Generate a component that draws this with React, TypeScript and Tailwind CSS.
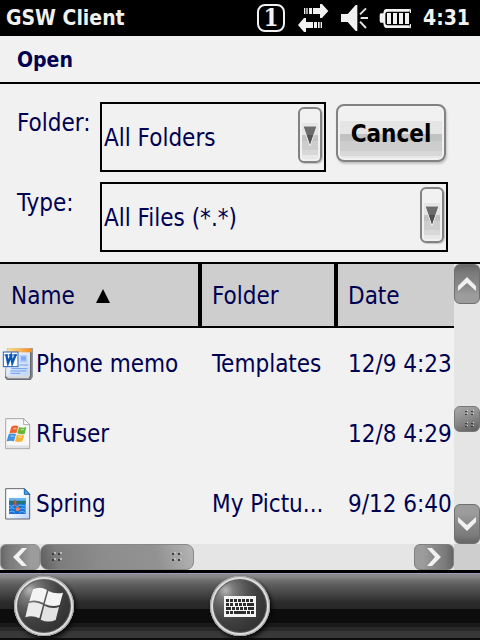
import type { ReactNode } from "react";

const files = [
  { name: "Phone memo", folder: "Templates", date: "12/9 4:23", icon: <WordIcon /> },
  { name: "RFuser", folder: "", date: "12/8 4:29", icon: <WindowsFileIcon /> },
  { name: "Spring", folder: "My Pictu...", date: "9/12 6:40", icon: <PictureIcon /> },
];

function TransferIcon() {
  return (
    <svg className="h-7 w-8" viewBox="0 0 96 84" fill="#f1f1f1">
      <path d="M21 12h4v18h-4zM28 12h4v18h-4zM36 12h9v18h-9zM48 12h21V0h6l19 21-19 21h-6V30H48z" />
      <path d="M3 63l18-21h6v12h21v18H27v12h-6zM51 54h9v18h-9zM63 54h5v18h-5zM71 54h4v18h-4z" />
    </svg>
  );
}

function SpeakerIcon() {
  return (
    <svg className="-mr-0.5 h-7 w-7" viewBox="0 0 84 84">
      <path d="M0 30h20L44 3h5v78h-5L20 54H0z" fill="#f1f1f1" />
      <path d="M57 31l18-18M59 42h22M57 53l18 19" stroke="#e4e4e4" strokeWidth="6" fill="none" />
    </svg>
  );
}

function BatteryIcon() {
  return (
    <svg className="h-7 w-8" viewBox="0 0 96 84">
      <path d="M92 15H22q-8 0-9 13H6q-4 0-4 6v16q0 6 4 6h7q1 16 9 16h70" fill="#f1f1f1" />
      <path d="M96 23H26q-7 0-7 7v27q0 7 7 7h70z" fill="#000" />
      <path d="M92 15q3 2 3 12M95 60q0 10-3 12" stroke="#f1f1f1" strokeWidth="4" fill="none" />
      <path d="M24 27h12v33H24zM42 27h12v33H42zM60 27h12v33H60zM78 27h12v33H78z" fill="#f1f1f1" />
    </svg>
  );
}

function WordIcon() {
  return (
    <svg className="h-8 w-8 shrink-0" viewBox="0 0 96 96">
      <defs>
        <linearGradient id="word-page" x1="0" y1="0" x2="1" y2="1">
          <stop offset="0" stopColor="#fdfeff" />
          <stop offset="1" stopColor="#bfd5f5" />
        </linearGradient>
        <linearGradient id="word-tab" x1="0" y1="0" x2="1" y2="0">
          <stop offset="0" stopColor="#ffe08a" />
          <stop offset="1" stopColor="#f08a24" />
        </linearGradient>
      </defs>
      <path d="M15 1h77v86l-7 10H16l-7-8z" fill="#686868" />
      <path d="M16 1h68v82l-4 7H18l-7-5z" fill="#d9d9d9" />
      <path d="M84 1h6v84l-8 7H14" fill="none" stroke="#8f9baf" strokeWidth="3" />
      <path d="M18 13h66v62l-6 8H12z" fill="url(#word-page)" />
      <path d="M16 1h74v12H16z" fill="url(#word-tab)" />
      <path d="M53 20h23v24H53z" fill="#b9cff6" />
      <path d="M57 25h15v13H57z" fill="#85aaf0" />
      <path d="M52 51h26M28 62h48M25 69h48M25 76h30" stroke="#6d99e8" strokeWidth="3" />
      <rect x="4" y="12" width="44" height="44" fill="#fff" stroke="#1e63c4" strokeWidth="3" />
      <path d="M13 21l5 24 9-22 4 22 10-25" fill="none" stroke="#0b57b8" strokeWidth="7" />
      <path d="M8 21h11M21 21h11M34 21h11" stroke="#0b57b8" strokeWidth="4" />
    </svg>
  );
}

function WindowsFileIcon() {
  return (
    <svg className="h-8 w-8 shrink-0" viewBox="0 0 96 96">
      <path d="M11 2h54l18 18v72H11z" fill="#f8f8f8" stroke="#a8a8a8" strokeWidth="3" />
      <path d="M13 82h68v8H13z" fill="#e2e2e2" />
      <path d="M65 2v18h18z" fill="#fff" stroke="#a8a8a8" strokeWidth="3" />
      <path d="M28 26q11-6 21-1l-6 21q-10-4-21 1z" fill="#f0622b" />
      <path d="M51 27q10 5 22 0l-5 20q-12 4-22-1z" fill="#63b734" />
      <path d="M20 49q11-5 22-1l-6 22q-10-4-22 0z" fill="#3f91e6" />
      <path d="M45 49q10 5 22 1l-6 20q-11 5-22-1z" fill="#fbb42e" />
      <path d="M33 33q6-3 10 0M56 34q5 2 10 0M26 55q5-3 10 0M49 56q5 3 11 1" fill="none" stroke="#fff" strokeOpacity=".5" strokeWidth="4" />
    </svg>
  );
}

function PictureIcon() {
  return (
    <svg className="h-8 w-8 shrink-0" viewBox="0 0 96 96">
      <defs>
        <linearGradient id="picture-page" x1="0" y1="0" x2="1" y2="1">
          <stop offset=".4" stopColor="#fdfeff" />
          <stop offset="1" stopColor="#b5d4fb" />
        </linearGradient>
      </defs>
      <path d="M11 2h56l16 16v75H11z" fill="url(#picture-page)" stroke="#62656b" strokeWidth="3" />
      <path d="M67 2v17h16z" fill="#4aa5f5" stroke="#1763b5" strokeWidth="3" />
      <path d="M21 30h50v48H21z" fill="#1d6fd6" />
      <path d="M21 30h50v8H21z" fill="#63b9f2" />
      <path d="M21 39h50v8H21z" fill="#23756d" />
      <path d="M21 52l8 3 8-4 9 4 8-4 17 4M21 62l9-3 8 3M52 64l9-4 10 4M22 72l9-3 8 4M52 73l9-3 9 4" fill="none" stroke="#63b9f2" strokeWidth="3" />
      <path d="M37 34l6 5v14h-6z" fill="#e5512d" />
      <path d="M41 60l8-3 5 6-5 7-7-2z" fill="#f0805a" />
    </svg>
  );
}

function FlagIcon() {
  return (
    <svg className="h-[60px] w-[60px]" viewBox="0 0 180 180" fill="#f4f4f4">
      <path d="M57 40Q78 30 99 42L88 81Q67 69 46 76z" />
      <path d="M103 45Q125 56 147 50L137 87Q115 95 92 84z" />
      <path d="M44 81Q65 74 87 86L76 127Q55 116 34 124z" fill="#ececec" />
      <path d="M91 89Q113 100 135 93L125 132Q103 142 80 131z" fill="#e2e2e2" />
    </svg>
  );
}

function KeyboardIcon() {
  return (
    <svg className="h-[60px] w-[60px]" viewBox="0 0 180 180" shapeRendering="crispEdges">
      <rect x="42" y="60" width="96" height="63" rx="3" fill="#f4f4f4" />
      <g fill="none" stroke="#2c2c2c" strokeWidth="9">
        <path d="M48 73h84" strokeDasharray="9 3" />
        <path d="M48 85h9M60 85h9M75 85h9M87 85h9M99 85h9M111 85h21" />
        <path d="M48 97h15M66 97h9M78 97h9M90 97h9M102 97h9M114 97h18" />
        <path d="M48 109h9M60 109h9M72 109h36M111 109h9M123 109h9" />
      </g>
    </svg>
  );
}

function Chevron({ d }: { d: string }) {
  return (
    <svg className="h-6 w-6 shrink-0" viewBox="0 0 24 24" fill="#f1f1f1">
      <path d={d} />
    </svg>
  );
}

function Grip() {
  return (
    <svg className="h-3 w-3" viewBox="0 0 12 12" shapeRendering="crispEdges">
      <path d="M1 2h2v2H1zM7 2h2v2H7zM1 8h2v2H1zM7 8h2v2H7z" fill="#3c3c3c" />
      <path d="M3 1h2v2H3zM9 1h2v2H9zM3 7h2v2H3zM9 7h2v2H9z" fill="#bbb" />
    </svg>
  );
}

function FlatGrip() {
  return (
    <svg className="h-1.5 w-3" viewBox="0 0 12 6" shapeRendering="crispEdges">
      <path d="M2 1h2v1H2zM8 1h2v1H8zM2 4h2v1H2zM8 4h2v1H8z" fill="#3c3c3c" />
      <path d="M4 0h1v1H4zM10 0h1v1h-1zM4 3h1v1H4zM10 3h1v1h-1z" fill="#ddd" />
    </svg>
  );
}

function SelectBox({ id, value }: { id: string; value: string }) {
  return (
    <div className="relative min-w-0 flex-1">
      <select
        id={id}
        className="h-[70px] w-full appearance-none border-2 border-black bg-[#f1f1f1] pt-0.5 pr-8 pl-0.5 text-[24px]"
      >
        <option>{value}</option>
      </select>
      <span className="pointer-events-none absolute top-[5px] right-1 flex h-14 w-6 items-center justify-center rounded-md border-2 border-[#828282] bg-[linear-gradient(to_bottom,#f1f1f1_14px,#e5e5e5_14px,#e5e5e5_26px,#c2c2c2_26px,#c2c2c2_32px,#cdcdcd_32px,#cdcdcd_41px,#d8d8d8_41px,#d8d8d8_46px,#e8e8e8_46px)] shadow-[inset_0_0_0_2px_#f1f1f1,1px_1px_1px_#c4c4c4]">
        <svg className="h-6 w-4 shrink-0" viewBox="0 0 16 24">
          <path d="M1 3h14L8 23z" fill="#6c6c6c" stroke="#ededed" strokeWidth="1" />
          <path d="M5 12h6L8 21z" fill="#505050" />
        </svg>
      </span>
    </div>
  );
}

function RoundButton({ label, children }: { label: string; children: ReactNode }) {
  return (
    <button
      aria-label={label}
      className="h-[60px] w-[60px] rounded-full bg-[radial-gradient(ellipse_at_26%_24%,#b5b5b5_0px,#7c7c7c_8px,#5c5c5c_18px,#404040_30px,#303030_48px)] shadow-[inset_0_0_0_1px_#a0a0a0,inset_0_0_0_3px_#dedede,inset_0_0_1px_4px_#606060,2px_3px_4px_#080808]"
    >
      {children}
    </button>
  );
}

export default function App() {
  return (
    <div className="flex min-h-screen flex-col bg-[#f1f1f1] font-['DejaVu_Sans_Condensed','Noto_Sans',sans-serif] text-[24px] leading-7 text-[#000050]">
      <header className="flex h-9 items-center bg-black pr-2.5 pl-1.5 text-[21px] font-bold text-[#f1f1f1]">
        <h1 className="flex-1">GSW Client</h1>
        <div className="flex items-center gap-3">
          <span className="flex h-7 w-7 items-center justify-center rounded-lg border-2 border-[#f1f1f1] font-['DejaVu_Serif_Condensed','DejaVu_Serif',serif] text-[24px]">
            1
          </span>
          <TransferIcon />
          <SpeakerIcon />
          <BatteryIcon />
          <time>4:31</time>
        </div>
      </header>

      <h2 className="flex h-12 items-center border-b-2 border-black pt-0.5 pl-[17px] text-[21px] font-bold">Open</h2>

      <form className="flex flex-col gap-2.5 pt-[18px] pr-8 pb-2.5 pl-[17px]">
        <div className="flex">
          <label htmlFor="folder" className="w-[83px] pt-[7px]">
            Folder:
          </label>
          <SelectBox id="folder" value="All Folders" />
          <button
            type="button"
            className="mt-0.5 mr-0.5 ml-2.5 h-[58px] w-[110px] rounded-lg border-2 border-[#828282] bg-[linear-gradient(to_bottom,#f1f1f1_15px,#e5e5e5_15px,#e5e5e5_28px,#c2c2c2_28px,#c2c2c2_35px,#cdcdcd_35px,#cdcdcd_45px,#d8d8d8_45px,#d8d8d8_50px,#e6e6e6_50px)] pt-0.5 font-bold text-black shadow-[inset_0_0_0_2px_#f1f1f1,1px_2px_2px_#c4c4c4]"
          >
            Cancel
          </button>
        </div>
        <div className="flex">
          <label htmlFor="type" className="w-[83px] pt-[7px]">
            Type:
          </label>
          <SelectBox id="type" value="All Files (*.*)" />
        </div>
      </form>

      <main className="flex flex-1 flex-col border-t-2 border-black">
        <div className="flex flex-1">
          <div className="min-w-0 flex-1">
            <table className="w-full table-fixed border-collapse text-left whitespace-nowrap">
              <thead>
                <tr className="h-16 bg-[#cecece] shadow-[inset_0_-2px_0_#000]">
                  <th className="w-[202px] p-0 font-normal">
                    <div className="flex h-16 items-center gap-5 border-r-4 border-black pl-[11px]">
                      Name
                      <svg className="h-4 w-4" viewBox="0 0 16 16">
                        <path d="M8 1l7 14H1z" />
                      </svg>
                    </div>
                  </th>
                  <th className="w-[136px] p-0 font-normal">
                    <div className="flex h-16 items-center border-r-4 border-black pl-2.5">Folder</div>
                  </th>
                  <th className="p-0 pl-2.5 font-normal">Date</th>
                </tr>
              </thead>
              <tbody>
                {files.map((file) => (
                  <tr key={file.name} className="h-[70px]">
                    <td className="p-0 pt-0.5 pl-0.5">
                      <div className="flex items-center gap-0.5">
                        {file.icon}
                        {file.name}
                      </div>
                    </td>
                    <td className="p-0 pt-0.5 pl-2.5">{file.folder}</td>
                    <td className="p-0 pt-0.5 pl-2.5">{file.date}</td>
                  </tr>
                ))}
              </tbody>
            </table>
          </div>

          <div className="flex w-[26px] flex-col bg-[#e5e5e5]">
            <button
              aria-label="Scroll up"
              className="flex h-10 items-center justify-center rounded-md border border-[#707070] bg-[linear-gradient(to_bottom,#666_0px,#7b7b7b_8px,#888_20px,#9c9c9c_30px)]"
            >
              <Chevron d="M3 14l9-9 9 9v5l-9-8-9 8z" />
            </button>
            <div className="flex-[102]" />
            <div className="flex h-[26px] flex-col items-center justify-between rounded-md border border-[#777] bg-[linear-gradient(160deg,#aaa,#8a8a8a_50%,#5c5c5c)] py-[3px] pl-1">
              <FlatGrip />
              <FlatGrip />
            </div>
            <div className="flex-[72]" />
            <button
              aria-label="Scroll down"
              className="flex h-10 items-center justify-center rounded-md border border-[#707070] bg-[linear-gradient(to_bottom,#9c9c9c_8px,#888_20px,#7b7b7b_30px,#666)]"
            >
              <Chevron d="M3 10l9 9 9-9V5l-9 8-9-8z" />
            </button>
          </div>
        </div>

        <div className="flex h-[26px] bg-[#e5e5e5]">
          <button
            aria-label="Scroll left"
            className="flex w-10 items-center justify-center rounded-md border border-[#909090] bg-[linear-gradient(to_right,#666_0px,#7b7b7b_8px,#888_20px,#9c9c9c_30px)]"
          >
            <Chevron d="M14 3l-9 9 9 9h5l-8-9 8-9z" />
          </button>
          <div className="flex w-[154px] items-center justify-between rounded-lg border border-[#888] bg-[linear-gradient(75deg,#5c5c5c,#7c7c7c_12%,#8c8c8c_40%,#929292_75%,#b4b4b4)] px-2.5">
            <Grip />
            <Grip />
          </div>
          <div className="flex-1" />
          <button
            aria-label="Scroll right"
            className="flex w-10 items-center justify-center rounded-md border border-[#808080] bg-[linear-gradient(to_right,#9c9c9c_8px,#888_20px,#7b7b7b_30px,#666)]"
          >
            <Chevron d="M10 3l9 9-9 9H5l8-9-8-9z" />
          </button>
          <div className="w-[26px] bg-[#cecece]" />
        </div>
      </main>

      <footer className="flex h-[70px] items-end gap-[136px] border-t-3 border-black bg-[linear-gradient(to_bottom,#9c9cc0_1px,#8e8a8e_1px,#858585_4px,#707070_7px,#5c5c5c_12px,#4c4c4c_18px,#3c3c3c_24px,#2c2c2c_29px,#262626_36px,#0d0d0d_36px,#0d0d0d_50px,#1a1a1a_50px,#1a1a1a_54px,#282828_54px,#282828_58px,#383838_58px,#383838_65px,#0d0d0d_65px)] px-3.5 pb-1">
        <RoundButton label="Start">
          <FlagIcon />
        </RoundButton>
        <RoundButton label="Keyboard">
          <KeyboardIcon />
        </RoundButton>
      </footer>
    </div>
  );
}
